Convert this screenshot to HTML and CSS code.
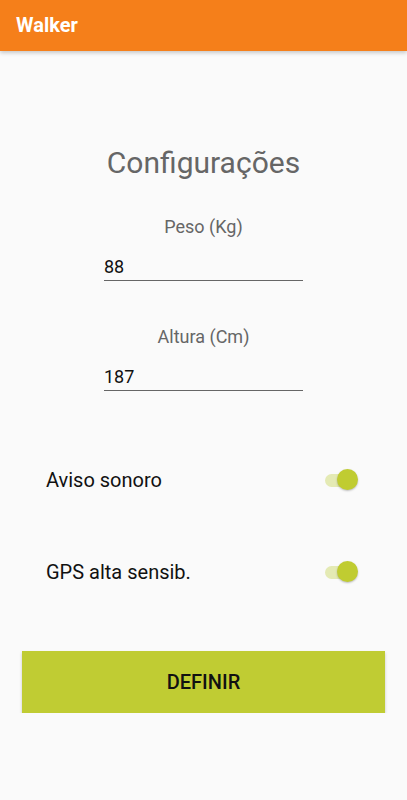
FILE: index.html
```html
<!DOCTYPE html>
<html lang="pt">
<head>
  <meta charset="UTF-8">
  <title>Walker</title>
  <meta name="viewport" content="width=device-width, initial-scale=1.0">
  <link rel="stylesheet" href="styles.css">
</head>
<body>

  <header class="appbar">Walker</header>

  <main class="content">
    <h1 class="title">Configurações</h1>

    <div class="field">
      <label class="field-label" for="peso">Peso (Kg)</label>
      <input class="field-input" type="text" id="peso" value="88">
    </div>

    <div class="field">
      <label class="field-label" for="altura">Altura (Cm)</label>
      <input class="field-input" type="text" id="altura" value="187">
    </div>

    <div class="toggles">
      <div class="toggle-row">
        <span>Aviso sonoro</span>
        <span class="switch"><span class="track"></span><span class="thumb"></span></span>
      </div>
      <div class="toggle-row">
        <span>GPS alta sensib.</span>
        <span class="switch"><span class="track"></span><span class="thumb"></span></span>
      </div>
    </div>

    <button class="submit">DEFINIR</button>
  </main>

</body>
</html>
```

FILE: styles.css
```css
body {
  margin: 0;
  font-family: Roboto, "Noto Sans", Arial, sans-serif;
  background: #fafafa;
  color: #222;
}
.appbar {
  height: 51px;
  background: #f57f1a;
  color: #fff;
  font-size: 20px;
  font-weight: bold;
  line-height: 51px;
  padding-left: 16px;
  box-shadow: 0 2px 4px rgba(0, 0, 0, 0.2);
}
.content {
  padding: 92px 22px 0;
}
.title {
  margin: 0;
  text-align: center;
  font-size: 30px;
  font-weight: normal;
  line-height: 40px;
  color: #666;
}
.field {
  width: 199px;
  margin: 0 auto;
  text-align: center;
}
.field:first-of-type { margin-top: 31px; }
.field + .field { margin-top: 43px; }
.field-label {
  display: block;
  font-size: 18px;
  line-height: 26px;
  color: #666;
}
.field-input {
  display: block;
  width: 100%;
  box-sizing: border-box;
  margin-top: 15px;
  padding: 0 0 1px;
  border: none;
  border-bottom: 1px solid #666;
  background: transparent;
  font-family: inherit;
  font-size: 18px;
  line-height: 24px;
  color: #111;
  outline: none;
}
.toggles {
  margin-top: 68px;
}
.toggle-row {
  display: flex;
  justify-content: space-between;
  align-items: center;
  height: 42px;
  padding: 0 27px 0 24px;
  font-size: 20px;
  color: #111;
}
.toggle-row + .toggle-row { margin-top: 50px; }
.switch {
  position: relative;
  width: 33px;
  height: 22px;
}
.track {
  position: absolute;
  left: 0;
  top: 5px;
  width: 30px;
  height: 13px;
  border-radius: 7px;
  background: #e4eab4;
}
.thumb {
  position: absolute;
  right: 0;
  top: 0;
  width: 21px;
  height: 21px;
  border-radius: 50%;
  background: #c0cc31;
  box-shadow: 0 1px 2px rgba(0, 0, 0, 0.25);
}
.submit {
  display: block;
  width: 100%;
  height: 62px;
  margin-top: 58px;
  border: none;
  background: #c0cc33;
  color: #111;
  font-family: inherit;
  font-size: 20px;
  font-weight: 500;
  box-shadow: 0 2px 3px rgba(0, 0, 0, 0.2);
}
```
